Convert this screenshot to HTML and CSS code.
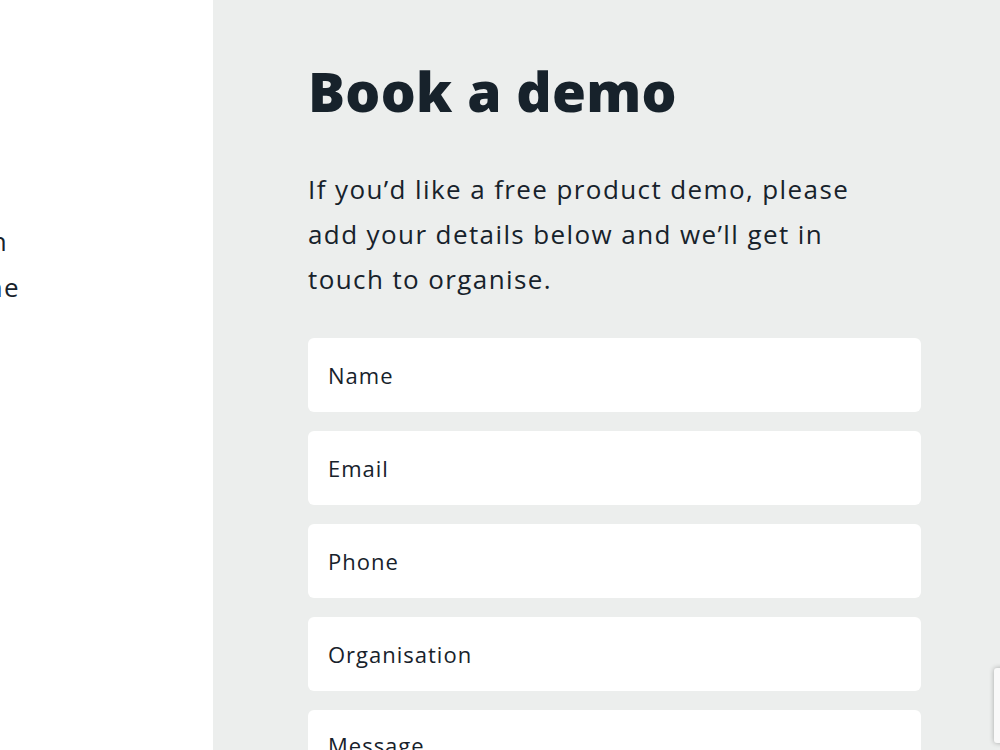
FILE: index.html
```html
<!DOCTYPE html>
<html lang="en">
<head>
    <meta charset="UTF-8">
    <meta name="viewport" content="width=device-width, initial-scale=1.0">
    <title>Book a demo</title>
    <link rel="stylesheet" href="styles.css">
</head>
<body>
    <div class="page">
        <div class="intro">
            <p class="intro-text">
                <span class="intro-line intro-line-first">Everything in one place with our solution</span>
                <span class="intro-line">so your team saves valuable time</span>
            </p>
        </div>
        <div class="demo">
            <h1>Book a demo</h1>
            <p class="lead">If you’d like a free product demo, please add your details below and we’ll get in touch to organise.</p>
            <form class="demo-form">
                <input type="text" name="name" placeholder="Name">
                <input type="email" name="email" placeholder="Email">
                <input type="tel" name="phone" placeholder="Phone">
                <input type="text" name="organisation" placeholder="Organisation">
                <textarea name="message" placeholder="Message"></textarea>
            </form>
        </div>
    </div>
    <div class="captcha-badge"></div>
</body>
</html>
```

FILE: styles.css
```css
body {
    margin: 0;
    font-family: "Open Sans", Lato, sans-serif;
    color: #17222b;
    overflow: hidden;
}
.page {
    display: flex;
    min-height: 100vh;
}
.intro {
    width: 213px;
    flex-shrink: 0;
    background-color: #fff;
    overflow: hidden;
    padding-top: 218px;
}
.intro-text {
    width: 700px;
    margin: 0 0 0 -680px;
    font-size: 26px;
    letter-spacing: 1.4px;
    line-height: 46px;
    text-align: right;
}
.intro-line {
    display: block;
}
.intro-line-first {
    margin-right: 12px;
}
.demo {
    flex: 1;
    background-color: #eceeed;
    padding: 53px 79px 0 95px;
}
h1 {
    margin: 0;
    font-size: 55px;
    font-weight: 800;
    letter-spacing: 0.3px;
    line-height: 76px;
}
.lead {
    margin: 38px 0 36px;
    font-size: 26px;
    letter-spacing: 1.4px;
    line-height: 45px;
    max-width: 570px;
}
.demo-form {
    display: flex;
    flex-direction: column;
    gap: 19px;
}
input, textarea {
    box-sizing: border-box;
    width: 100%;
    height: 74px;
    padding: 0 20px;
    border: none;
    border-radius: 6px;
    background-color: #fff;
    font-family: inherit;
    font-size: 22px;
    letter-spacing: 1px;
    color: #17222b;
}
textarea {
    height: 150px;
    padding-top: 20px;
    resize: none;
}
input::placeholder, textarea::placeholder {
    color: #17222b;
    opacity: 1;
}
.captcha-badge {
    position: fixed;
    right: -250px;
    bottom: 7px;
    width: 256px;
    height: 75px;
    background-color: #f9f9f9;
    border-radius: 3px;
    box-shadow: 0 0 5px rgba(0, 0, 0, 0.3);
}
```
